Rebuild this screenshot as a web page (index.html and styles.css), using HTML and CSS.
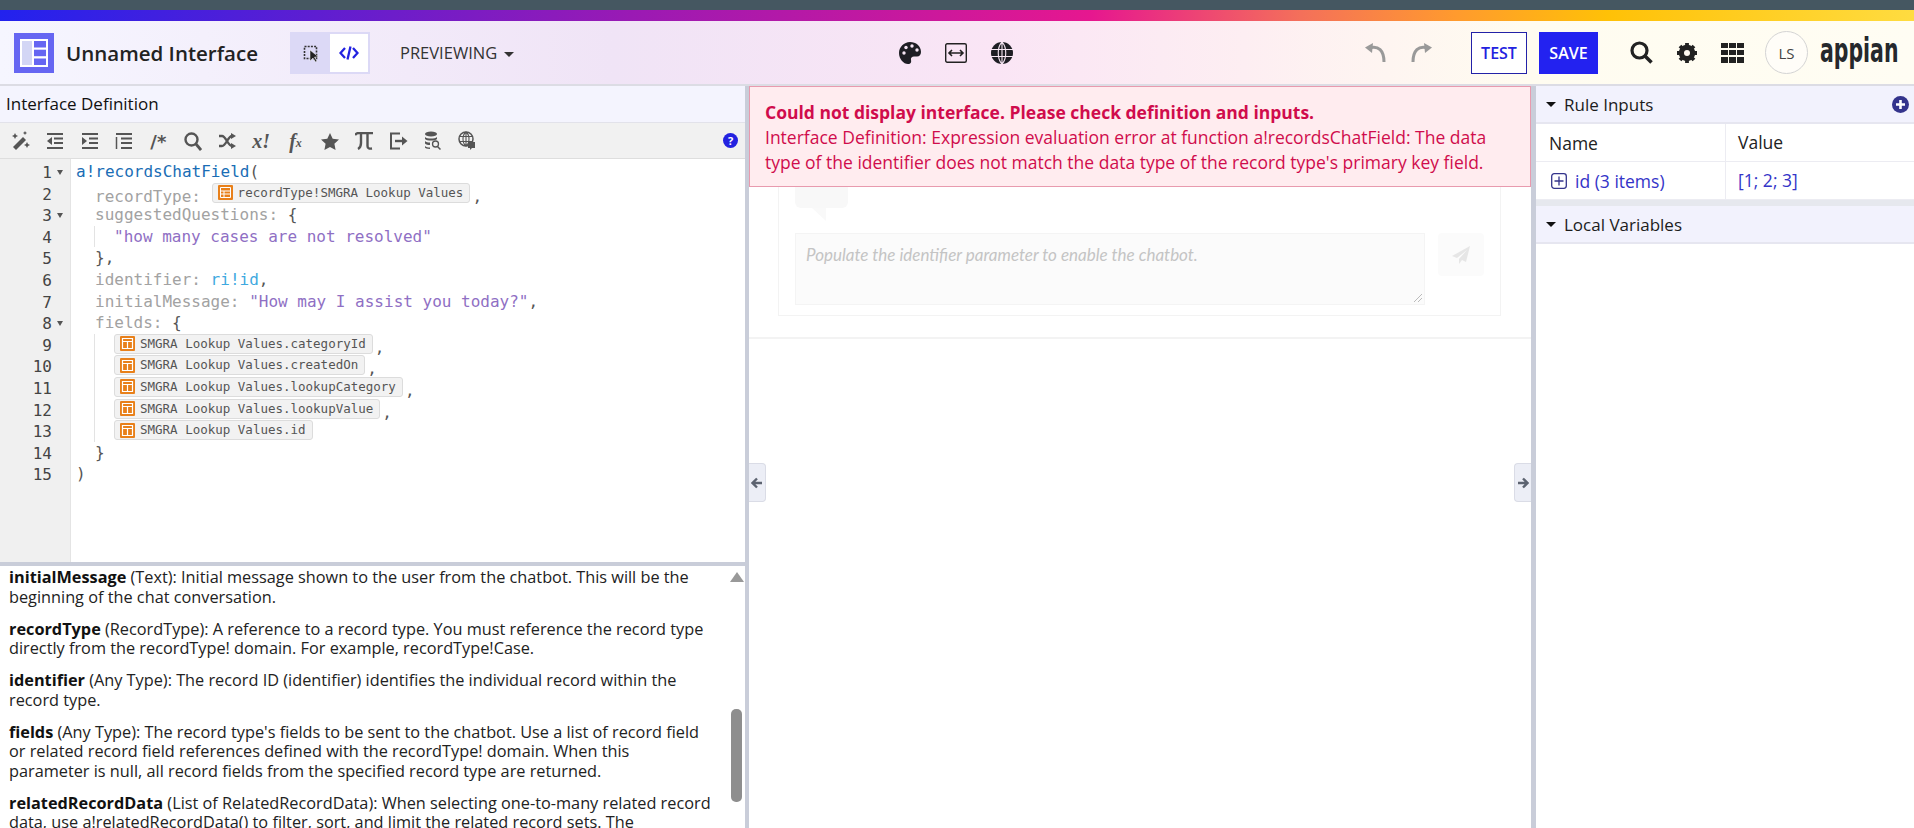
FILE: index.html
```html
<!DOCTYPE html>
<html lang="en">
<head>
    <meta charset="UTF-8">
    <title>Unnamed Interface</title>
    <link rel="stylesheet" href="styles.css">
</head>
<body>
    <div class="top-strip"></div>
    <div class="rainbow"></div>
    <header class="header">
        <svg class="app-icon" viewBox="0 0 40 40"><rect width="40" height="40" fill="#6666f2"/><rect x="6" y="6" width="28" height="28" fill="#fff"/><rect x="8" y="8" width="10" height="24" fill="#d3d6f5"/><rect x="20" y="8" width="12" height="6.5" fill="#6666f2"/><rect x="20" y="16.7" width="12" height="6.5" fill="#6666f2"/><rect x="20" y="25.5" width="12" height="6.5" fill="#6666f2"/></svg>
        <div class="app-name">Unnamed Interface</div>
        <div class="mode-toggle">
            <div class="mode-btn">
                <svg width="18" height="18" viewBox="0 0 18 18"><rect x="2.5" y="2.5" width="12" height="12" fill="none" stroke="#333" stroke-width="1.6" stroke-dasharray="2 1.2"/><path d="M8 6l0 11 3-3 2.5 4 1.5-1-2.5-3.8 3.8-.4z" fill="#222" stroke="#fff" stroke-width=".5"/></svg>
            </div>
            <div class="mode-btn active">
                <svg width="20" height="16" viewBox="0 0 20 16"><path d="M6 3L1.5 8 6 13M14 3l4.500 5L14 13M11.500 1.500L8.500 14.500" fill="none" stroke="#2322e0" stroke-width="2.300"/></svg>
            </div>
        </div>
        <div class="previewing">PREVIEWING <span class="caret"></span></div>
        <div class="center-tools">
            <svg width="22" height="24" viewBox="0 0 22 24"><path d="M11 1C5 1 0 6 0 12c0 6 4.500 11 9 11 3 0 3.500-2 3-4-.5-2 1-3.500 3-3.500h3c2.500 0 4-2 4-4.500C22 5 17 1 11 1z" fill="#1e1e24"/><circle cx="5" cy="12" r="1.700" fill="#f6e6f5"/><circle cx="7" cy="6.500" r="1.700" fill="#f6e6f5"/><circle cx="13" cy="5" r="1.700" fill="#f6e6f5"/><circle cx="18" cy="9" r="1.700" fill="#f6e6f5"/></svg>
            <svg width="22" height="20" viewBox="0 0 22 20"><rect x=".7" y=".7" width="20.600" height="18.600" rx="1.500" fill="none" stroke="#222" stroke-width="1.400"/><path d="M4 10h14M7 7l-3 3 3 3M15 7l3 3-3 3" fill="none" stroke="#222" stroke-width="1.600"/></svg>
            <svg width="22" height="22" viewBox="0 0 22 22"><circle cx="11" cy="11" r="11" fill="#1e1e24"/><path d="M0 7.500h22M0 14.500h22M11 0v22M11 0C6 5 6 17 11 22M11 0c5 5 5 17 0 22" fill="none" stroke="#f8e8f5" stroke-width="1.100"/></svg>
        </div>
        <div class="history">
            <svg width="22" height="20" viewBox="0 0 22 20"><path d="M7 4.500C14 3 20 7 20 19" fill="none" stroke="#999" stroke-width="3"/><path d="M9 0L1 4.500 8 10z" fill="#999"/></svg>
            <svg width="22" height="20" viewBox="0 0 22 20"><path d="M15 4.500C8 3 2 7 2 19" fill="none" stroke="#999" stroke-width="3"/><path d="M13 0l8 4.500L14 10z" fill="#999"/></svg>
        </div>
        <div class="btn btn-test">TEST</div>
        <div class="btn btn-save">SAVE</div>
        <svg class="search-icon" width="23" height="23" viewBox="0 0 23 23"><circle cx="9.500" cy="9.500" r="7.500" fill="none" stroke="#222" stroke-width="3.200"/><path d="M15 15l6.500 6.500" stroke="#222" stroke-width="3.600"/></svg>
        <svg class="gear-icon" width="22" height="22" viewBox="0 0 22 22"><circle cx="11" cy="11" r="6" fill="none" stroke="#222" stroke-width="4.500"/><path d="M11 1v20M1 11h20M4 4l14 14M18 4L4 18" stroke="#222" stroke-width="3.800"/><circle cx="11" cy="11" r="3" fill="#fffaf2"/></svg>
        <div class="grid-icon"><i></i><i></i><i></i><i></i><i></i><i></i><i></i><i></i><i></i></div>
        <div class="avatar">LS</div>
        <div class="logo">appian</div>
    </header>

    <main class="main">
        <section class="left">
            <div class="panel-title">Interface Definition</div>
            <div class="toolbar">
                <div class="tool"><svg width="20" height="20" viewBox="0 0 20 20"><path d="M2 16L12 6l3 3L5 19z" fill="#555"/><path d="M4 2l1 2 2 1-2 1-1 2-1-2-2-1 2-1zM16 11l1 2 2 1-2 1-1 2-1-2-2-1 2-1zM14 0l.7 1.300L16 2l-1.300.7L14 4l-.7-1.300L12 2l1.300-.7z" fill="#555"/></svg></div>
                <div class="tool"><svg width="18" height="18" viewBox="0 0 18 18"><path d="M1 2h16M8 6.500h9M8 11h9M1 16h16" stroke="#555" stroke-width="2"/><path d="M6 5v8L1 9z" fill="#555"/></svg></div>
                <div class="tool"><svg width="18" height="18" viewBox="0 0 18 18"><path d="M1 2h16M8 6.500h9M8 11h9M1 16h16" stroke="#555" stroke-width="2"/><path d="M1 5v8l5-4z" fill="#555"/></svg></div>
                <div class="tool"><svg width="18" height="18" viewBox="0 0 18 18"><path d="M1 2h16M6 6.500h11M6 11h11M6 16h11" stroke="#555" stroke-width="2"/><path d="M1.500 5v12" stroke="#555" stroke-width="1.500"/></svg></div>
                <div class="tool comment-tool">/*</div>
                <div class="tool"><svg width="18" height="19" viewBox="0 0 18 19"><circle cx="7.500" cy="7.500" r="6" fill="none" stroke="#555" stroke-width="2.400"/><path d="M12 12l5 6" stroke="#555" stroke-width="2.800"/></svg></div>
                <div class="tool"><svg width="18" height="16" viewBox="0 0 18 16"><path d="M1 3h3c4 0 6 10 10 10M1 13h3c4 0 6-10 10-10" fill="none" stroke="#555" stroke-width="2.400"/><path d="M13 0l5 3-5 3zM13 10l5 3-5 3z" fill="#555"/></svg></div>
                <div class="tool var-tool">x!</div>
                <div class="tool fx-tool">f<small>x</small></div>
                <div class="tool"><svg width="18" height="17" viewBox="0 0 18 17"><path d="M9 0l2.700 5.700 6.300.8-4.600 4.300 1.200 6.200L9 14l-5.600 3 1.200-6.200L0 6.500l6.300-.8z" fill="#555"/></svg></div>
                <div class="tool"><svg width="18" height="18" viewBox="0 0 18 18"><path d="M0 3c1-1.500 2-2 4-2h14M6 2v9c0 3-1 5-3 6M12.500 2v12c0 2 1.500 3 4.500 2.500" fill="none" stroke="#555" stroke-width="2.400"/></svg></div>
                <div class="tool"><svg width="19" height="18" viewBox="0 0 19 18"><path d="M11 1.500H2v15h9" fill="none" stroke="#555" stroke-width="2"/><path d="M6 9h8" stroke="#555" stroke-width="2.400"/><path d="M13 4.500L18.500 9 13 13.500z" fill="#555"/></svg></div>
                <div class="tool"><svg width="18" height="20" viewBox="0 0 18 20"><ellipse cx="7" cy="3" rx="6" ry="2.500" fill="#555"/><path d="M1 6c2 2 10 2 12 0v2c-2 2-10 2-12 0zM1 10c1 1 3 1.500 5 1.500L6 14c-2 0-4-.5-5-1.500zM1 15c1 1 3 1.500 5 1.500V18c-3 0-5-1-5-1.500z" fill="#555"/><circle cx="11.500" cy="13" r="3" fill="none" stroke="#555" stroke-width="1.300"/><path d="M13.500 15.500l3 3" stroke="#555" stroke-width="1.500"/></svg></div>
                <div class="tool"><svg width="18" height="20" viewBox="0 0 18 20"><circle cx="8" cy="8" r="7" fill="none" stroke="#555" stroke-width="1.500"/><path d="M1 5.500h14M1 10.500h14M8 1v14M8 1c-4 3-4 11 0 14M8 1c4 3 4 11 0 14" fill="none" stroke="#555" stroke-width="1.100"/><path d="M10 11h7v6h-3l-2 2v-2h-2z" fill="#555"/></svg></div>
                <svg class="help" width="15" height="15" viewBox="0 0 15 15"><circle cx="7.500" cy="7.500" r="7.500" fill="#2322e0"/><text x="7.500" y="11.500" text-anchor="middle" class="help-mark">?</text></svg>
            </div>
            <div class="editor">
                <div class="gutter">
                    <div class="num">1<span class="fold"></span></div>
                    <div class="num">2</div>
                    <div class="num">3<span class="fold"></span></div>
                    <div class="num">4</div>
                    <div class="num">5</div>
                    <div class="num">6</div>
                    <div class="num">7</div>
                    <div class="num">8<span class="fold"></span></div>
                    <div class="num">9</div>
                    <div class="num">10</div>
                    <div class="num">11</div>
                    <div class="num">12</div>
                    <div class="num">13</div>
                    <div class="num">14</div>
                    <div class="num">15</div>
                </div>
                <div class="code">
                    <div class="ln"><span class="fn">a!recordsChatField</span>(</div>
                    <div class="ln in1"><span class="key">recordType:</span> <span class="tag tag-type"><svg width="15" height="15" viewBox="0 0 15 15"><rect width="15" height="15" rx="1" fill="#e8801a"/><path d="M2.500 2.500h10v10h-10zM2.500 6h10M2.500 9h10M6 6v6.500" fill="none" stroke="#fff" stroke-width="1"/></svg>recordType!SMGRA Lookup Values</span>,</div>
                    <div class="ln in1"><span class="key">suggestedQuestions:</span> {</div>
                    <div class="ln in2"><span class="str">"how many cases are not resolved"</span></div>
                    <div class="ln in1">},</div>
                    <div class="ln in1"><span class="key">identifier:</span> <span class="ri">ri!id</span>,</div>
                    <div class="ln in1"><span class="key">initialMessage:</span> <span class="str">"How may I assist you today?"</span>,</div>
                    <div class="ln in1"><span class="key">fields:</span> {</div>
                    <div class="ln in2"><span class="tag"><svg width="15" height="15" viewBox="0 0 15 15"><rect width="15" height="15" rx="1" fill="#e8801a"/><path d="M2.500 2.500h10v10h-10zM2.500 5.500h10M7.500 5.500v7" fill="none" stroke="#fff" stroke-width="1.200"/></svg>SMGRA Lookup Values.categoryId</span>,</div>
                    <div class="ln in2"><span class="tag"><svg width="15" height="15" viewBox="0 0 15 15"><rect width="15" height="15" rx="1" fill="#e8801a"/><path d="M2.500 2.500h10v10h-10zM2.500 5.500h10M7.500 5.500v7" fill="none" stroke="#fff" stroke-width="1.200"/></svg>SMGRA Lookup Values.createdOn</span>,</div>
                    <div class="ln in2"><span class="tag"><svg width="15" height="15" viewBox="0 0 15 15"><rect width="15" height="15" rx="1" fill="#e8801a"/><path d="M2.500 2.500h10v10h-10zM2.500 5.500h10M7.500 5.500v7" fill="none" stroke="#fff" stroke-width="1.200"/></svg>SMGRA Lookup Values.lookupCategory</span>,</div>
                    <div class="ln in2"><span class="tag"><svg width="15" height="15" viewBox="0 0 15 15"><rect width="15" height="15" rx="1" fill="#e8801a"/><path d="M2.500 2.500h10v10h-10zM2.500 5.500h10M7.500 5.500v7" fill="none" stroke="#fff" stroke-width="1.200"/></svg>SMGRA Lookup Values.lookupValue</span>,</div>
                    <div class="ln in2"><span class="tag"><svg width="15" height="15" viewBox="0 0 15 15"><rect width="15" height="15" rx="1" fill="#e8801a"/><path d="M2.500 2.500h10v10h-10zM2.500 5.500h10M7.500 5.500v7" fill="none" stroke="#fff" stroke-width="1.200"/></svg>SMGRA Lookup Values.id</span></div>
                    <div class="ln in1">}</div>
                    <div class="ln">)</div>
                </div>
            </div>
            <div class="docs">
                <div class="docs-text">
                    <p><b>initialMessage</b> (Text): Initial message shown to the user from the chatbot. This will be the beginning of the chat conversation.</p>
                    <p><b>recordType</b> (RecordType): A reference to a record type. You must reference the record type directly from the recordType! domain. For example, recordType!Case.</p>
                    <p><b>identifier</b> (Any Type): The record ID (identifier) identifies the individual record within the record type.</p>
                    <p><b>fields</b> (Any Type): The record type's fields to be sent to the chatbot. Use a list of record field or related record field references defined with the recordType! domain. When this parameter is null, all record fields from the specified record type are returned.</p>
                    <p><b>relatedRecordData</b> (List of RelatedRecordData): When selecting one-to-many related record data, use a!relatedRecordData() to filter, sort, and limit the related record sets. The</p>
                </div>
                <div class="scrollbar">
                    <span class="scroll-up"></span>
                    <span class="scroll-thumb"></span>
                </div>
            </div>
        </section>

        <div class="divider"></div>

        <section class="center">
            <div class="preview">
                <div class="chat-card">
                    <div class="bubble"></div>
                    <div class="chat-input-row">
                        <div class="chat-input">Populate the identifier parameter to enable the chatbot.
                            <svg class="resize" width="10" height="10" viewBox="0 0 10 10"><path d="M1 9l8-8M5 9l4-4" stroke="#bbb" stroke-width="1"/></svg>
                        </div>
                        <div class="chat-send"><svg width="18" height="18" viewBox="0 0 18 18"><path d="M18 0L0 10l5 2L15 4 7 13v5l3-4 4 2z" fill="#e6e6e6"/></svg></div>
                    </div>
                </div>
            </div>
            <div class="error-box">
                <div class="error-title">Could not display interface. Please check definition and inputs.</div>
                <div class="error-msg">Interface Definition: Expression evaluation error at function a!recordsChatField: The data type of the identifier does not match the data type of the record type's primary key field.</div>
            </div>
            <div class="handle handle-left"><svg width="12" height="12" viewBox="0 0 12 12"><path d="M1 6h10M6 1.500L1.500 6 6 10.500" fill="none" stroke="#5c6370" stroke-width="2.400"/></svg></div>
            <div class="handle handle-right"><svg width="12" height="12" viewBox="0 0 12 12"><path d="M1 6h10M6 1.500L10.500 6 6 10.500" fill="none" stroke="#5c6370" stroke-width="2.400"/></svg></div>
        </section>

        <div class="divider"></div>

        <section class="right">
            <div class="side-head">
                <span class="caret dark"></span>Rule Inputs
                <svg class="add" width="17" height="17" viewBox="0 0 17 17"><circle cx="8.500" cy="8.500" r="8.500" fill="#34348c"/><path d="M8.500 4v9M4 8.500h9" stroke="#fff" stroke-width="2.600"/></svg>
            </div>
            <div class="inputs-row inputs-head">
                <div class="cell-name">Name</div>
                <div class="cell-value">Value</div>
            </div>
            <div class="inputs-row inputs-body">
                <div class="cell-name"><svg width="16" height="16" viewBox="0 0 16 16"><rect x=".7" y=".7" width="14.600" height="14.600" rx="2.500" fill="none" stroke="#34348c" stroke-width="1.300"/><path d="M8 3.500v9M3.500 8h9" stroke="#34348c" stroke-width="1.300"/></svg>id (3 items)</div>
                <div class="cell-value">[1; 2; 3]</div>
            </div>
            <div class="band"></div>
            <div class="side-head">
                <span class="caret dark"></span>Local Variables
            </div>
        </section>
    </main>
</body>
</html>
```

FILE: styles.css
```css
* {
    box-sizing: border-box;
}

html, body {
    margin: 0;
    height: 828px;
    overflow: hidden;
}

body {
    font-family: "Open Sans", sans-serif;
    background: #fff;
    color: #222;
}

.top-strip {
    height: 10px;
    background: #455761;
}

.rainbow {
    height: 11px;
    background: linear-gradient(90deg, #2222ee 0%, #9a1ab4 33%, #e6178f 57%, #f4705a 68%, #ff9a2e 76%, #ffc107 84%, #ffdc40 100%);
}

/* header */
.header {
    height: 65px;
    display: flex;
    align-items: center;
    padding-left: 14px;
    background: linear-gradient(90deg, #f6f6ff 0%, #f0e4f6 32%, #fae5f5 52%, #fdeef2 65%, #fffcf0 80%, #fffdf3 100%);
    border-bottom: 2px solid #dcdce4;
}

.header > * {
    flex: none;
}

.app-icon {
    width: 40px;
    height: 40px;
}

.app-name {
    width: 224px;
    margin-left: 12px;
    font-size: 20.500px;
    font-weight: 600;
    white-space: nowrap;
}

.mode-toggle {
    display: flex;
    width: 80px;
    height: 42px;
    background: #dcd9f6;
    padding: 2px;
}

.mode-btn {
    width: 38px;
    display: flex;
    align-items: center;
    justify-content: center;
}

.mode-btn.active {
    background: #fff;
}

.previewing {
    margin-left: 30px;
    width: 115px;
    font-size: 16.500px;
    color: #333;
    white-space: nowrap;
}

.caret {
    display: inline-block;
    margin-left: 3px;
    vertical-align: middle;
    border-left: 5px solid transparent;
    border-right: 5px solid transparent;
    border-top: 5px solid #333;
}

.center-tools {
    margin-left: 384px;
    display: flex;
    align-items: center;
    gap: 24px;
}

.history {
    margin-left: 351px;
    display: flex;
    gap: 25px;
}

.btn {
    height: 42px;
    display: flex;
    align-items: center;
    justify-content: center;
    font-size: 16px;
    font-weight: 600;
}

.btn-test {
    margin-left: 38px;
    width: 56px;
    background: #fff;
    border: 1px solid #2322a8;
    color: #2322e0;
}

.btn-save {
    margin-left: 12px;
    width: 59px;
    background: #2322f0;
    color: #fff;
}

.search-icon {
    margin-left: 32px;
}

.gear-icon {
    margin-left: 23px;
}

.grid-icon {
    margin-left: 23px;
    width: 23px;
    height: 20px;
    display: grid;
    grid-template-columns: repeat(3, 1fr);
    gap: 1.500px;
}

.grid-icon i {
    background: #222;
}

.avatar {
    margin-left: 21px;
    width: 43px;
    height: 43px;
    border: 1px solid #d4d4d4;
    border-radius: 50%;
    background: #fffdf8;
    display: flex;
    align-items: center;
    justify-content: center;
    font-size: 15px;
    color: #444;
}

.logo {
    width: 80px;
    margin-left: 12px;
    font-family: "DejaVu Sans", sans-serif;
    font-weight: 700;
    font-size: 33px;
    color: #25282c;
    line-height: 1;
    padding-bottom: 4px;
    white-space: nowrap;
    transform: scaleX(.62);
    transform-origin: left center;
}

/* main layout */
.main {
    height: 742px;
    display: grid;
    grid-template-columns: 745px 4px 782px 5px 378px;
}

.divider {
    background: #c9cdd9;
}

.left {
    display: flex;
    flex-direction: column;
    height: 742px;
    overflow: hidden;
}

.panel-title {
    height: 37px;
    line-height: 36px;
    padding-left: 6px;
    font-size: 17px;
    background: #f4f4fe;
    border-bottom: 1px solid #e2e2ea;
    color: #111;
}

.toolbar {
    height: 36px;
    display: flex;
    align-items: center;
    padding: 1px 0 0 4px;
    background: #f1f1f1;
    border-bottom: 1px solid #dedede;
    color: #555;
    position: relative;
}

.tool {
    width: 34.300px;
    display: flex;
    align-items: center;
    justify-content: center;
}

.comment-tool {
    font-family: "DejaVu Sans", sans-serif;
    font-size: 18px;
    font-weight: 700;
}

.var-tool,
.fx-tool {
    font-family: "Liberation Serif", serif;
    font-style: italic;
    font-weight: 700;
    font-size: 20px;
}

.fx-tool small {
    font-size: 12px;
    padding-top: 5px;
}

.help {
    position: absolute;
    right: 7px;
    top: 10px;
}

.help-mark {
    fill: #fff;
    font-family: "Open Sans", sans-serif;
    font-size: 11px;
    font-weight: 700;
}

/* editor */
.editor {
    height: 403px;
    flex: none;
    display: flex;
    font-family: "DejaVu Sans Mono", monospace;
    font-size: 16px;
    line-height: 21.600px;
    background: #fff;
    color: #555;
}

.gutter {
    width: 71px;
    flex: none;
    background: #f0f0f0;
    border-right: 1px solid #e4e4e4;
    color: #444;
    text-align: right;
    padding: 3px 18px 0 0;
}

.num {
    position: relative;
}

.fold {
    position: absolute;
    left: 100%;
    top: 8px;
    margin-left: 5px;
    border-left: 3.500px solid transparent;
    border-right: 3.500px solid transparent;
    border-top: 5px solid #555;
}

.code {
    flex: 1;
    padding: 2px 0 0 5px;
}

.ln {
    height: 21.600px;
    white-space: pre;
}

.in1 {
    padding-left: 19px;
}

.in2 {
    margin-left: 18px;
    padding-left: 19px;
    border-left: 1px solid #e3e3e3;
}

.fn {
    color: #1a6db5;
}

.key {
    color: #a2a2a2;
}

.str {
    color: #8f6fc4;
}

.ri {
    color: #3fa9e0;
}

.tag {
    display: inline-flex;
    align-items: center;
    height: 20px;
    padding: 0 6px 0 5px;
    margin: 0 2px 0 0;
    background: #f2f2f2;
    border: 1px solid #dcdcdc;
    border-radius: 3px;
    font-size: 12.500px;
    line-height: 18px;
    color: #555;
    vertical-align: 1px;
}

.tag svg {
    margin-right: 5px;
    flex: none;
}

.tag-type {
    margin-left: 1px;
}

/* function docs */
.docs {
    flex: 1;
    min-height: 0;
    display: flex;
    border-top: 4px solid #c9cdd9;
    overflow: hidden;
}

.docs-text {
    flex: 1;
    padding: 2px 15px 0 9px;
    font-size: 16.300px;
    line-height: 19.500px;
    color: #222;
}

.docs-text p {
    margin: 0 0 12.500px;
}

.docs-text b {
    color: #111;
}

.scrollbar {
    width: 16px;
    flex: none;
    position: relative;
}

.scroll-up {
    position: absolute;
    top: 6px;
    left: 1px;
    border-left: 7px solid transparent;
    border-right: 7px solid transparent;
    border-bottom: 10px solid #999;
}

.scroll-thumb {
    position: absolute;
    top: 143px;
    left: 2px;
    width: 11px;
    height: 93px;
    border-radius: 5px;
    background: #8e8e8e;
}

/* preview */
.center {
    position: relative;
    overflow: hidden;
}

.preview {
    height: 253px;
    padding: 12px 30px 0 29px;
    border-bottom: 2px solid #f3f3f3;
}

.chat-card {
    height: 218px;
    padding: 76px 16px 0 16px;
    border: 1px solid #f3f3f3;
}

.bubble {
    position: relative;
    width: 53px;
    height: 33px;
    background: #f8f8f8;
    border-radius: 0 0 6px 6px;
}

.bubble::after {
    content: "";
    position: absolute;
    top: 100%;
    left: 17px;
    border-top: 13px solid #f9f9f9;
    border-left: 14px solid transparent;
}

.chat-input-row {
    display: flex;
    gap: 13px;
    margin-top: 25px;
}

.chat-input {
    position: relative;
    width: 631px;
    height: 72px;
    padding: 9px 10px;
    background: #fbfbfb;
    border: 1px solid #f4f4f4;
    font-family: "Lato", sans-serif;
    font-style: italic;
    font-size: 17px;
    line-height: 24px;
    color: #c4c4c4;
}

.resize {
    position: absolute;
    right: 1px;
    bottom: 1px;
}

.chat-send {
    width: 46px;
    height: 43px;
    background: #fbfbfb;
    border-radius: 4px;
    display: flex;
    align-items: center;
    justify-content: center;
}

.error-box {
    position: absolute;
    top: 0;
    left: 0;
    right: 0;
    height: 101px;
    padding: 13px 14px 0 15px;
    background: #ffecef;
    border: 1px solid #e89aae;
    color: #d00c4c;
    font-size: 17.500px;
    line-height: 25px;
}

.error-title {
    font-weight: 700;
}

.handle {
    position: absolute;
    top: 377px;
    width: 17px;
    height: 39px;
    background: #eceef6;
    border: 1px solid #dadce6;
    display: flex;
    align-items: center;
    justify-content: center;
}

.handle-left {
    left: 0;
    border-left: 0;
    border-radius: 0 4px 4px 0;
}

.handle-right {
    right: 0;
    border-right: 0;
    border-radius: 4px 0 0 4px;
}

/* right panel */
.right {
    background: #fff;
}

.side-head {
    position: relative;
    height: 38px;
    padding-left: 10px;
    display: flex;
    align-items: center;
    font-size: 17px;
    font-weight: 500;
    background: #f2f2fd;
    border-bottom: 2px solid #e6e6f0;
    color: #1c1c1c;
}

.caret.dark {
    margin: 0 8px 0 0;
    border-top-color: #111;
}

.add {
    position: absolute;
    right: 5px;
    top: 10px;
}

.inputs-row {
    display: grid;
    grid-template-columns: 190px 1fr;
    height: 38px;
    border-bottom: 1px solid #ececf2;
    font-size: 17.500px;
    line-height: 36px;
}

.inputs-body {
    color: #3434c8;
}

.inputs-row .cell-name {
    padding-left: 13px;
    border-right: 1px solid #ececf2;
    display: flex;
    align-items: center;
    gap: 8px;
}

.inputs-body .cell-name {
    padding-left: 15px;
}

.inputs-row .cell-value {
    padding-left: 12px;
}

.band {
    height: 6px;
    background: #e6e8ee;
}
```
